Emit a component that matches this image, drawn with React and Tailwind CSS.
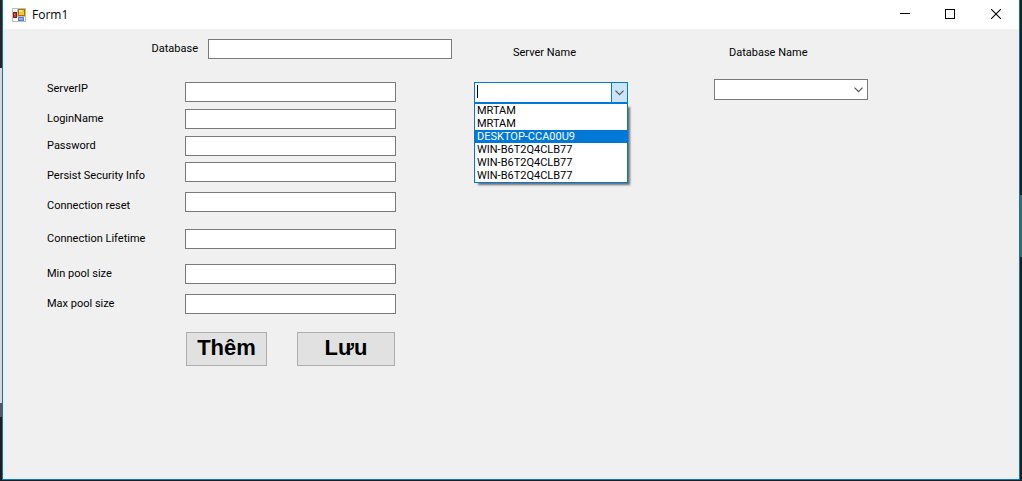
import React, { useState } from "react";

const fields = [
  { id: "serverIp", label: "ServerIP", row: "mt-[23px]", text: "pb-1.5" },
  { id: "loginName", label: "LoginName", row: "mt-[7px]", text: "" },
  { id: "password", label: "Password", row: "mt-[7px]", text: "" },
  { id: "persist", label: "Persist Security Info", row: "mt-1.5", text: "pt-2" },
  { id: "reset", label: "Connection reset", row: "mt-2.5", text: "pt-2" },
  { id: "lifetime", label: "Connection Lifetime", row: "mt-[17px]", text: "" },
  { id: "minPool", label: "Min pool size", row: "mt-[15px]", text: "" },
  { id: "maxPool", label: "Max pool size", row: "mt-2.5", text: "" },
];

const servers = [
  "MRTAM",
  "MRTAM",
  "DESKTOP-CCA00U9",
  "WIN-B6T2Q4CLB77",
  "WIN-B6T2Q4CLB77",
  "WIN-B6T2Q4CLB77",
];

const textBox = "h-5 border border-[#7a7a7a] bg-white px-1 outline-none focus:border-[#0078d7]";

const FormIcon = () => (
  <svg width="14" height="14" viewBox="0 0 14 14" shapeRendering="crispEdges" aria-hidden="true">
    <rect width="14" height="14" fill="#bdbdbd" />
    <rect x="1" y="1" width="4" height="3" fill="#fff" />
    <rect x="1" y="10" width="4" height="3" fill="#fff" />
    <rect x="5" y="9" width="1" height="4" fill="#fff" />
    <rect x="12" y="9" width="1" height="4" fill="#fff" />
    <rect x="1" y="4" width="4" height="6" fill="#8c1a10" />
    <rect x="2" y="5" width="2" height="4" fill="#c8412f" />
    <rect x="2" y="6" width="1" height="1" fill="#f08a70" />
    <rect x="6" y="1" width="7" height="7" fill="#a87400" />
    <rect x="7" y="2" width="5" height="5" fill="#f8c62c" />
    <rect x="7" y="2" width="3" height="2" fill="#ffe487" />
    <rect x="6" y="9" width="6" height="4" fill="#4a80dc" />
    <rect x="7" y="10" width="4" height="2" fill="#86b2f6" />
  </svg>
);

const Chevron = () => (
  <svg width="9" height="6" viewBox="0 0 9 6" fill="none" stroke="#555" strokeWidth="1.2" aria-hidden="true">
    <path d="M0.5 0.7 L4.5 4.7 L8.5 0.7" />
  </svg>
);

const TitleBar = () => (
  <header className="flex h-[29px] items-center bg-white pl-[9px]">
    <FormIcon />
    <h1 className="ml-1.5 font-['Open_Sans',sans-serif] text-xs">Form1</h1>
    <div className="ml-auto flex pb-0.5">
      <button type="button" aria-label="Minimize" className="flex h-7 w-11 items-center justify-center">
        <svg width="10" height="10" shapeRendering="crispEdges">
          <path d="M0 4.5H10" stroke="#000" />
        </svg>
      </button>
      <button type="button" aria-label="Maximize" className="flex h-7 w-[46px] items-center justify-center">
        <svg width="10" height="10" shapeRendering="crispEdges">
          <rect x="0.5" y="0.5" width="9" height="9" fill="none" stroke="#000" />
        </svg>
      </button>
      <button type="button" aria-label="Close" className="flex h-7 w-[46px] items-center justify-center">
        <svg width="10" height="10">
          <path d="M0 0L10 10M10 0L0 10" stroke="#000" strokeWidth="1.1" />
        </svg>
      </button>
    </div>
  </header>
);

const ServerCombo = () => {
  const [open, setOpen] = useState(true);
  const [value, setValue] = useState("");
  const [active, setActive] = useState(2);

  const pick = (name) => {
    setValue(name);
    setOpen(false);
  };

  return (
    <div className="relative w-[154px]">
      <div className="flex h-[21px] border border-[#0078d7] bg-white">
        <div className="relative flex min-w-0 flex-1">
          <input
            id="serverName"
            role="combobox"
            aria-expanded={open}
            aria-controls="serverList"
            value={value}
            onChange={(e) => setValue(e.target.value)}
            className="w-full bg-transparent px-0.5 caret-transparent outline-none"
          />
          {/* text cursor */}
          {value === "" && <span className="absolute top-0.5 left-0.5 h-[13px] w-px bg-black"></span>}
        </div>
        <button
          type="button"
          aria-label="Open server list"
          onClick={() => setOpen(!open)}
          className="flex w-4 items-center justify-center border-l border-[#0078d7] bg-[#cce4f7]"
        >
          <Chevron />
        </button>
      </div>
      {open && (
        <ul
          id="serverList"
          role="listbox"
          aria-label="Server Name"
          className="absolute top-full left-0 w-full border border-[#0078d7] bg-white shadow-[3px_3px_2px_-1px_rgba(0,0,0,0.55)]"
        >
          {servers.map((name, index) => (
            <li
              key={index}
              role="option"
              aria-selected={index === active}
              onMouseEnter={() => setActive(index)}
              onClick={() => pick(name)}
              className={`px-0.5 leading-[13px] ${index === active ? "bg-[#0078d7] text-white" : ""}`}
            >
              {name}
            </li>
          ))}
        </ul>
      )}
    </div>
  );
};

const ConnectionForm = () => (
  <form className="w-[449px] shrink-0 pt-2.5" onSubmit={(e) => e.preventDefault()}>
    <div className="flex items-center justify-end">
      <label htmlFor="database" className="mr-2.5">Database</label>
      <input id="database" type="text" className={`w-[244px] ${textBox}`} />
    </div>

    {fields.map((field) => (
      <div key={field.id} className={`flex h-5 items-center pl-11 ${field.row}`}>
        <label htmlFor={field.id} className={`w-[138px] whitespace-nowrap ${field.text}`}>
          {field.label}
        </label>
        <input
          id={field.id}
          type={field.id === "password" ? "password" : "text"}
          className={`w-[211px] ${textBox}`}
        />
      </div>
    ))}

    <div className="mt-[18px] flex gap-[30px] pl-[183px] font-['Liberation_Sans',Arial,sans-serif] text-[22px] leading-6 font-bold">
      <button type="submit" className="h-[34px] w-[81px] border border-[#adadad] bg-[#e1e1e1] pb-0.5">Thêm</button>
      <button type="button" className="h-[34px] w-[98px] border border-[#adadad] bg-[#e1e1e1] pb-0.5">Lưu</button>
    </div>
  </form>
);

const App = () => {
  return (
    <div className="flex min-h-screen flex-col bg-[#1e1e1e] pb-px font-['Roboto','Liberation_Sans',sans-serif] text-[11px] leading-4 text-black">
      <div className="flex flex-1">
        {/* Windows behind the form, only their edges are visible */}
        <div className="flex w-0.5 flex-col">
          <div className="h-[68px] bg-[#252526]"></div>
          <div className="h-[335px] bg-[#d8d8d8]"></div>
          <div className="h-[14px] bg-[#55585c]"></div>
        </div>

        <div className="flex flex-1 flex-col border-x border-b border-[#0078d7] bg-[#f0f0f0]">
          <TitleBar />
          <main className="flex flex-1 items-start">
            <ConnectionForm />
            <section className="ml-[22px] pt-4">
              <label htmlFor="serverName" className="mb-[21px] block pl-[39px]">Server Name</label>
              <ServerCombo />
            </section>
            <section className="ml-[86px] pt-4">
              <label htmlFor="databaseName" className="mb-[18px] block pl-[15px]">Database Name</label>
              <div className="relative w-[154px]">
                <select
                  id="databaseName"
                  defaultValue=""
                  className="block h-[21px] w-full appearance-none border border-[#7a7a7a] bg-white px-0.5 outline-none"
                >
                  <option value=""></option>
                </select>
                <span className="pointer-events-none absolute inset-y-0 right-[5px] flex items-center">
                  <Chevron />
                </span>
              </div>
            </section>
          </main>
        </div>

        <div className="flex w-0.5 flex-col">
          <div className="h-[195px] bg-[#1e1f20]"></div>
          <div className="h-[62px] bg-[#3f6373]"></div>
        </div>
      </div>
    </div>
  );
};

export default App;
